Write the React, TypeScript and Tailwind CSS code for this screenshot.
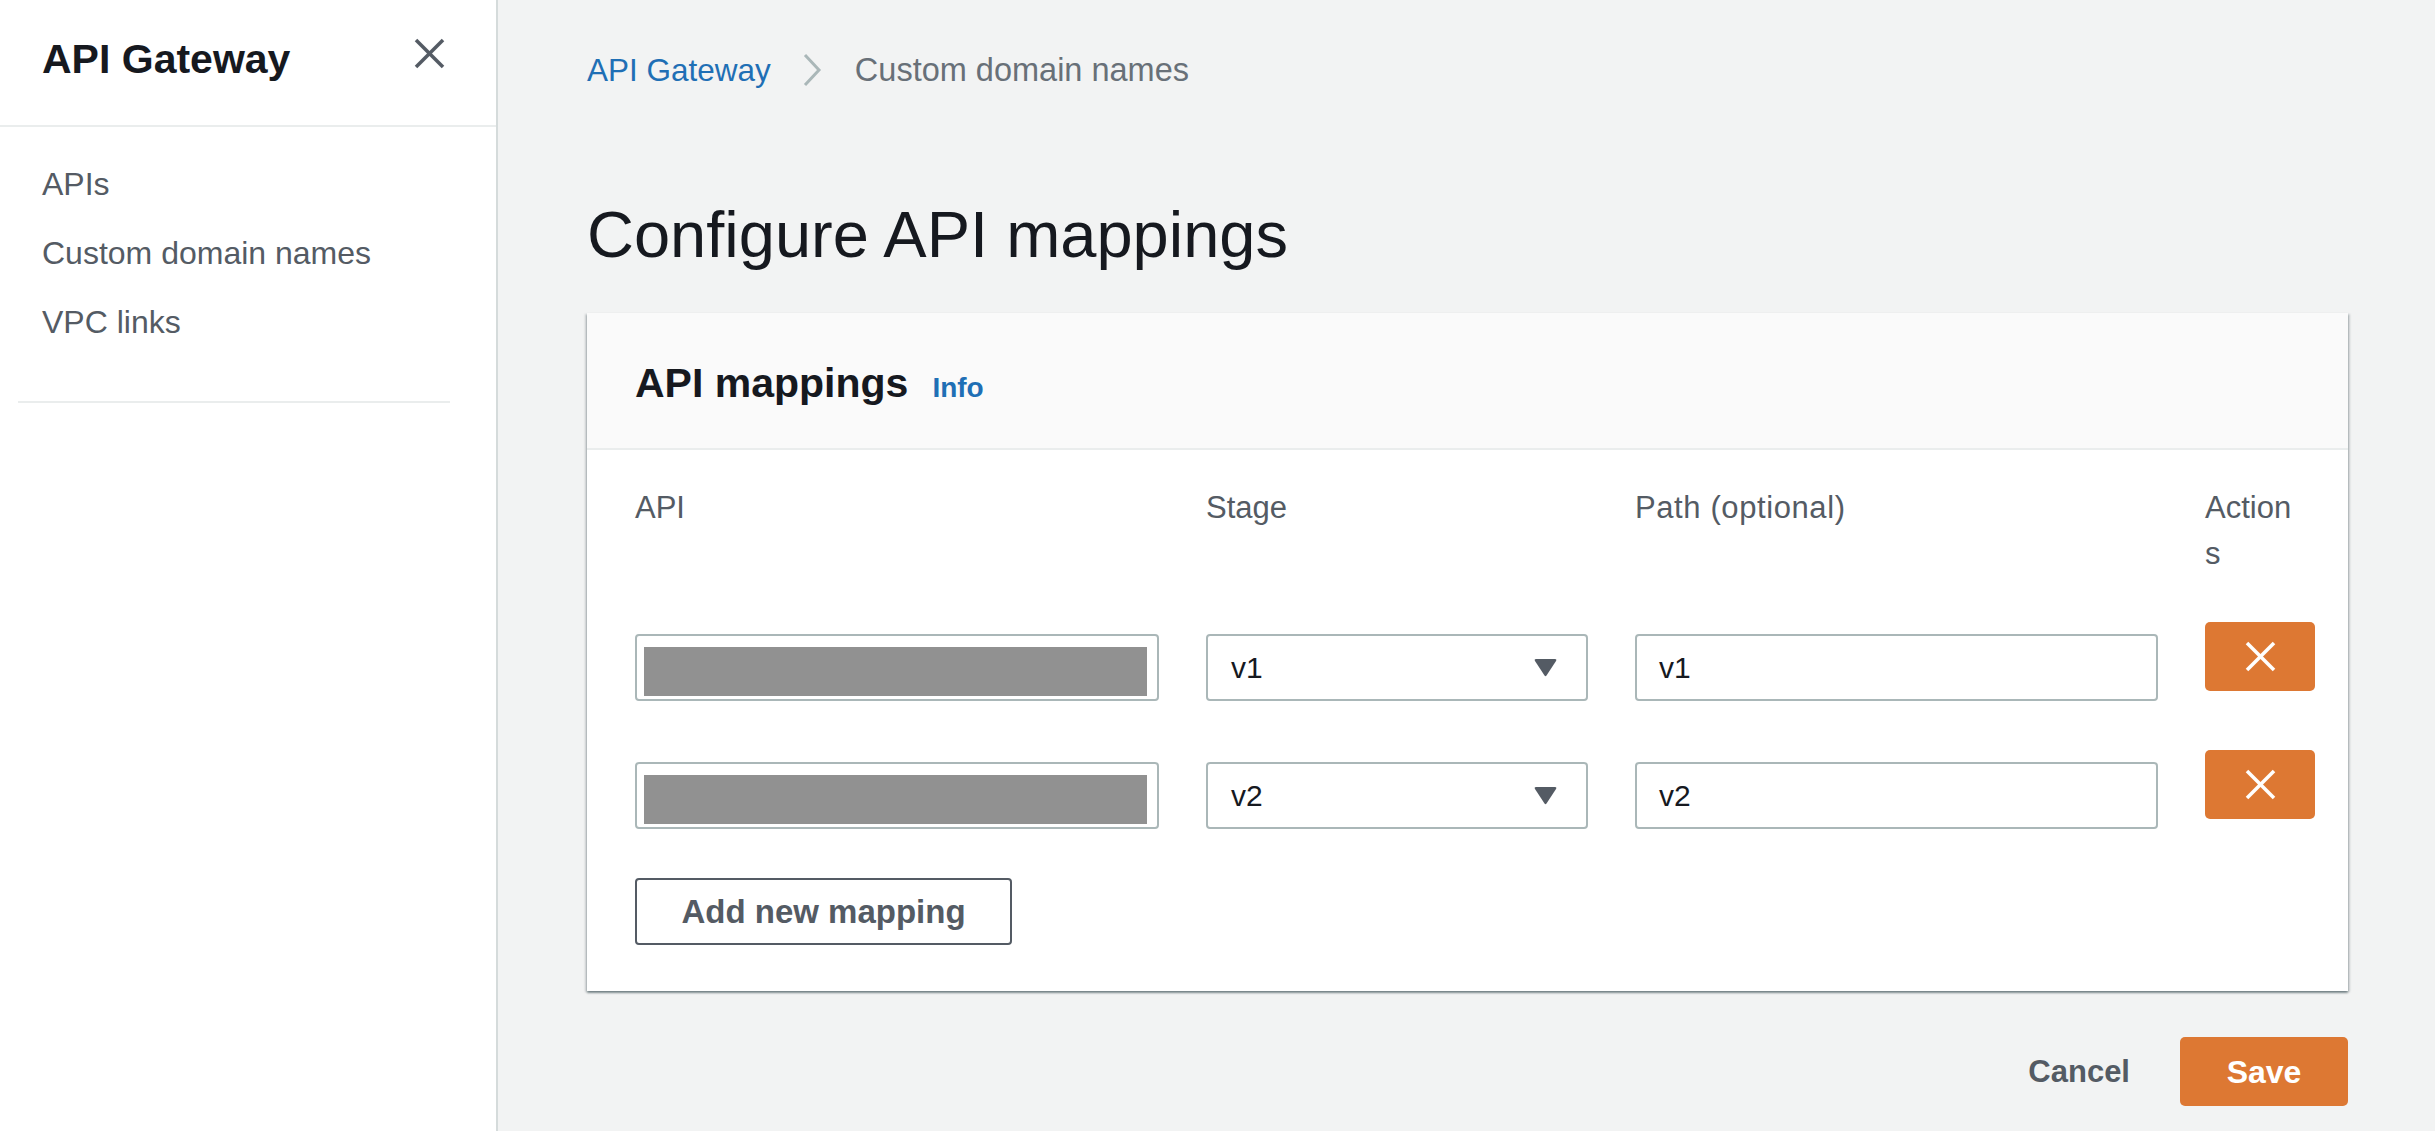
import React from "react";

const font = { fontFamily: '"Liberation Sans", Arial, sans-serif' };

function CloseIcon({ size = 31, color = "#545b64", stroke = 3.5 }: { size?: number; color?: string; stroke?: number }) {
  return (
    <svg width={size} height={size} viewBox="0 0 31 31" fill="none">
      <line x1="2" y1="2" x2="29" y2="29" stroke={color} strokeWidth={stroke} />
      <line x1="29" y1="2" x2="2" y2="29" stroke={color} strokeWidth={stroke} />
    </svg>
  );
}

function ApiInput() {
  return (
    <div className="mt-[12px] h-[67px] rounded-[4px] border-2 border-[#aab7b8] bg-white pl-[7px] pr-[10px] pt-[11px] pb-[3px]">
      <div className="h-[49px] w-full bg-[#919191]" />
    </div>
  );
}

function StageSelect({ value }: { value: string }) {
  return (
    <div className="mt-[12px] flex h-[67px] items-center justify-between rounded-[4px] border-2 border-[#aab7b8] bg-white pl-[23px] pr-[29px]">
      <span className="text-[30px] leading-[36px] text-[#16191f]">{value}</span>
      <svg width="23" height="19" viewBox="0 0 23 19">
        <path d="M2 1 H21 Q23 1 22 3 L12.5 17.5 Q11.5 19 10.5 17.5 L1 3 Q0 1 2 1 Z" fill="#545b64" />
      </svg>
    </div>
  );
}

function PathInput({ value }: { value: string }) {
  return (
    <div className="mt-[12px] flex h-[67px] items-center rounded-[4px] border-2 border-[#aab7b8] bg-white pl-[22px]">
      <span className="text-[30px] leading-[36px] text-[#16191f]">{value}</span>
    </div>
  );
}

function DeleteButton() {
  return (
    <div className="flex h-[69px] w-[110px] items-center justify-center rounded-[5px] bg-[#dd7833]">
      <CloseIcon size={31} color="#ffffff" stroke={3.5} />
    </div>
  );
}

function MappingRow({ v }: { v: string }) {
  return (
    <>
      <ApiInput />
      <StageSelect value={v} />
      <PathInput value={v} />
      <DeleteButton />
    </>
  );
}

export default function App() {
  return (
    <div style={font} className="flex h-[1131px] w-full overflow-hidden bg-[#f2f3f3]">
      {/* Sidebar */}
      <aside className="flex w-[498px] shrink-0 flex-col border-r-2 border-[#d5dbdb] bg-white">
        <div className="flex h-[127px] items-start justify-between border-b-2 border-[#eaeded] pl-[42px] pr-[51px] pt-[35px]">
          <h2 className="text-[41px] font-bold leading-[48px] text-[#16191f]">API Gateway</h2>
          <div className="mt-[3px]">
            <CloseIcon />
          </div>
        </div>
        <nav className="flex flex-col pl-[42px] pt-[23px]">
          <div className="h-[69px] text-[32px] leading-[69px] text-[#545b64]">APIs</div>
          <div className="h-[69px] text-[32px] leading-[69px] text-[#545b64]">Custom domain names</div>
          <div className="h-[69px] text-[32px] leading-[69px] text-[#545b64]">VPC links</div>
        </nav>
        <div className="ml-[18px] mt-[44px] h-[2px] w-[432px] bg-[#eaeded]" />
      </aside>

      {/* Main */}
      <main className="flex flex-1 flex-col pl-[89px] pr-[87px] pt-[50px]">
        <div className="flex h-[40px] items-center">
          <span className="text-[31.5px] leading-[40px] text-[#1f6fb5]">API Gateway</span>
          <svg className="ml-[31px] mr-[33px]" width="20" height="34" viewBox="0 0 20 34" fill="none">
            <polyline points="3,2 17,17 3,32" stroke="#aab7b8" strokeWidth="3" />
          </svg>
          <span className="text-[32.5px] leading-[40px] text-[#687078]">Custom domain names</span>
        </div>

        <h1 className="mt-[107px] text-[65px] font-normal leading-[76px] text-[#16191f]">Configure API mappings</h1>

        <section className="mt-[40px] bg-white shadow-[0_2px_2px_0_rgba(0,28,36,0.4),2px_1px_2px_0_rgba(0,28,36,0.15),-2px_1px_2px_0_rgba(0,28,36,0.15)]">
          <div className="flex h-[137px] items-baseline gap-[24px] border-b-2 border-[#eaeded] bg-[#fafafa] pl-[48px] pt-[48px]">
            <h2 className="text-[41px] font-bold leading-[44px] text-[#16191f]">API mappings</h2>
            <span className="text-[28px] font-bold leading-[44px] text-[#1f6fb5]">Info</span>
          </div>

          <div className="pl-[48px] pr-[33px] pt-[35px] pb-[46px]">
            <div className="grid grid-cols-[524px_382px_523px_110px] gap-x-[47px]">
              <div className="text-[31px] leading-[46px] text-[#545b64]">API</div>
              <div className="text-[31px] leading-[46px] text-[#545b64]">Stage</div>
              <div className="text-[31px] leading-[46px] tracking-[0.6px] text-[#545b64]">Path (optional)</div>
              <div className="text-[31px] leading-[46px] text-[#545b64]">
                Action
                <br />s
              </div>
            </div>

            <div className="mt-[45px] grid grid-cols-[524px_382px_523px_110px] items-start gap-x-[47px] gap-y-[49px]">
              <MappingRow v="v1" />
              <MappingRow v="v2" />
            </div>

            <div className="mt-[49px] flex h-[67px] w-[377px] items-center justify-center rounded-[4px] border-2 border-[#545b64] bg-white">
              <span className="text-[33px] font-bold leading-[40px] text-[#545b64]">Add new mapping</span>
            </div>
          </div>
        </section>

        <div className="mt-[46px] flex items-center justify-end gap-[50px]">
          <span className="text-[31px] font-bold leading-[40px] text-[#545b64]">Cancel</span>
          <div className="flex h-[69px] w-[168px] items-center justify-center rounded-[5px] bg-[#dd7833]">
            <span className="text-[32px] font-bold leading-[40px] text-white">Save</span>
          </div>
        </div>
      </main>
    </div>
  );
}
